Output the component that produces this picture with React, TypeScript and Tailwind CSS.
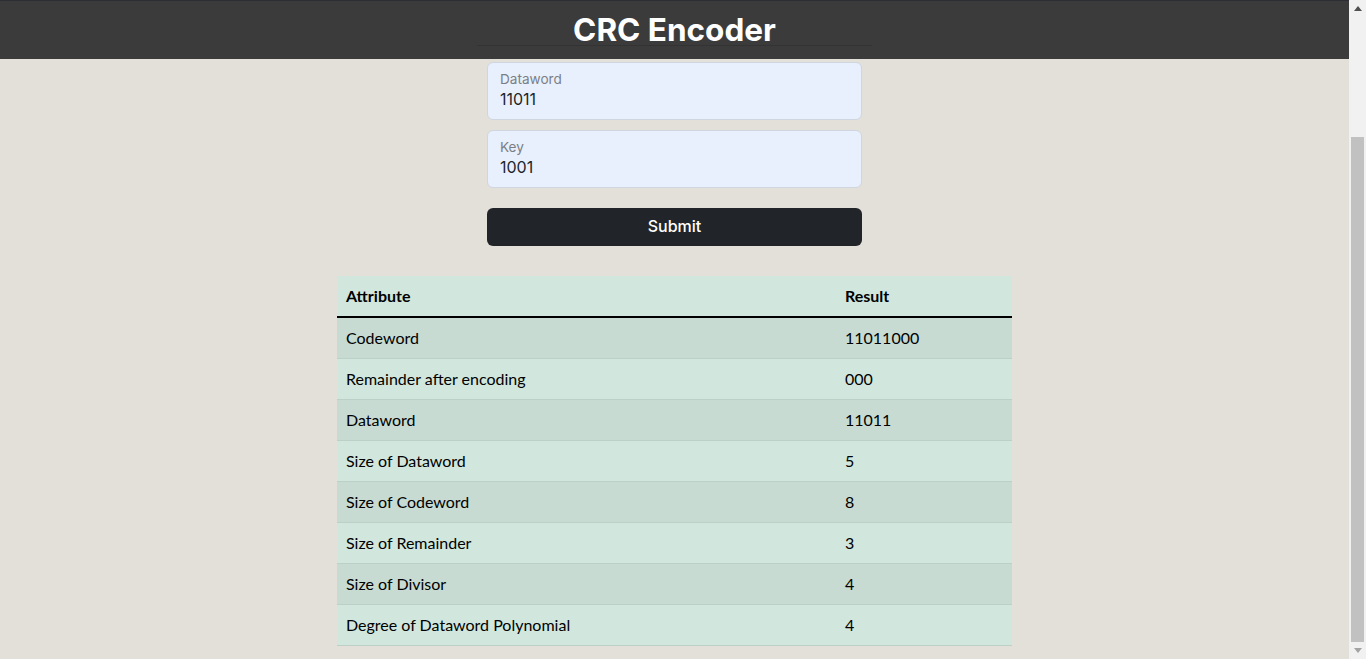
import React from "react";

const rows: [string, string][] = [
  ["Codeword", "11011000"],
  ["Remainder after encoding", "000"],
  ["Dataword", "11011"],
  ["Size of Dataword", "5"],
  ["Size of Codeword", "8"],
  ["Size of Remainder", "3"],
  ["Size of Divisor", "4"],
  ["Degree of Dataword Polynomial", "4"],
];

function Field({ label, value }: { label: string; value: string }) {
  return (
    <div className="flex h-[58px] w-full flex-col rounded-[6px] border border-[#cfd6df] bg-[#e8f0fe] px-[12px] pt-[7px]">
      <span className="text-[13.6px] leading-[18px] text-[#7b7f85]">{label}</span>
      <span className="text-[16px] leading-[22px] text-[#212529]">{value}</span>
    </div>
  );
}

export default function App() {
  const ui = { fontFamily: "Inter, 'Noto Sans', sans-serif" };
  const tbl = { fontFamily: "Lato, 'Noto Sans', sans-serif" };
  return (
    <div className="flex h-[659px] w-full overflow-hidden bg-[#e3dfd9]">
      <div className="flex min-w-0 flex-1 flex-col">
        <header
          className="flex h-[59px] flex-col items-center border-t border-[#2c2e33] bg-[#3b3b3b] pt-[14px]"
          style={ui}
        >
          <h1 className="text-[31.5px] font-bold leading-[30px] text-white">CRC Encoder</h1>
          <div className="h-px w-[395px] bg-[#333333]" />
        </header>
        <main className="flex flex-col items-center pt-[3px]">
          <form className="flex w-[375px] flex-col" style={ui} onSubmit={(e) => e.preventDefault()}>
            <Field label="Dataword" value="11011" />
            <div className="h-[10px]" />
            <Field label="Key" value="1001" />
            <button
              type="submit"
              className="mt-[20px] h-[38px] w-full rounded-[6px] bg-[#212529] pb-[2px] text-[16px] font-medium text-white"
            >
              Submit
            </button>
          </form>
          <table className="mt-[30px] w-[675px] border-collapse text-left text-[16px] text-black" style={tbl}>
            <thead>
              <tr className="bg-[#d1e7dd]">
                <th className="w-[500px] border-b-2 border-black px-[9px] py-[8px] font-bold leading-[24px]">
                  Attribute
                </th>
                <th className="border-b-2 border-black px-[8px] py-[8px] font-bold leading-[24px]">Result</th>
              </tr>
            </thead>
            <tbody>
              {rows.map(([a, r], i) => (
                <tr key={a} className={i % 2 === 0 ? "bg-[#c7dbd2]" : "bg-[#d1e7dd]"}>
                  <td className="border-b border-[#bcd0c7] px-[9px] py-[8px] leading-[24px]">{a}</td>
                  <td className="border-b border-[#bcd0c7] px-[8px] py-[8px] leading-[24px]">{r}</td>
                </tr>
              ))}
            </tbody>
          </table>
        </main>
      </div>
      <div className="flex w-[17px] flex-col bg-[#f1f1f1]">
        <div className="flex h-[17px] items-center justify-center">
          <svg width="8" height="5" viewBox="0 0 8 5">
            <polygon points="4,0 8,5 0,5" fill="#505050" />
          </svg>
        </div>
        <div className="flex flex-1 flex-col px-[2px] pt-[120px]">
          <div className="flex-1 bg-[#c1c1c1]" />
        </div>
        <div className="flex h-[17px] items-center justify-center">
          <svg width="8" height="5" viewBox="0 0 8 5">
            <polygon points="0,0 8,0 4,5" fill="#a3a3a3" />
          </svg>
        </div>
      </div>
    </div>
  );
}
